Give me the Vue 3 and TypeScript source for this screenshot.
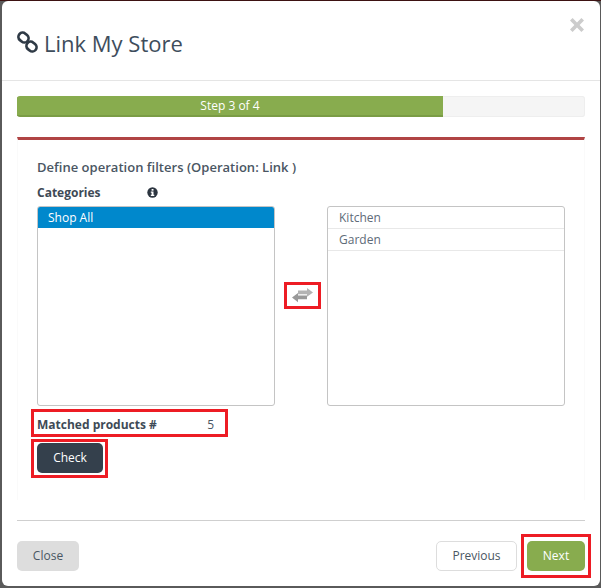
<script setup lang="ts">
const leftItems: string[] = ['Shop All']
const rightItems: string[] = ['Kitchen', 'Garden']
</script>

<template>
  <div class="page">
    <div class="modal">
      <header class="head">
        <h1 class="title">
          <svg class="link-icon" width="24" height="24" viewBox="0 0 24 24" fill="none" stroke="#2f3a46" stroke-width="2.7">
            <rect x="1.2" y="2.4" width="10.6" height="8.4" rx="4.2" transform="rotate(40 6.5 6.6)" />
            <rect x="9.2" y="11.4" width="10.6" height="8.4" rx="4.2" transform="rotate(40 14.5 15.6)" />
          </svg>
          <span>Link My Store</span>
        </h1>
        <svg class="close-x" width="14" height="14" viewBox="0 0 14 14">
          <path d="M2.6 0 7 4.4 11.4 0 14 2.6 9.6 7 14 11.4 11.4 14 7 9.6 2.6 14 0 11.4 4.4 7 0 2.6Z" fill="#cccccc" />
        </svg>
      </header>

      <main class="body">
        <div class="progress">
          <div class="bar">Step 3 of 4</div>
        </div>

        <section class="panel">
          <h2 class="define">Define operation filters (Operation: Link )</h2>
          <div class="cat-row">
            <span class="cat-label">Categories</span>
            <svg width="11" height="11" viewBox="0 0 11 11">
              <circle cx="5.5" cy="5.5" r="5.2" fill="#2c3540" />
              <rect x="4.6" y="2" width="1.9" height="1.7" fill="#fff" />
              <path d="M3.8 4.6h2.7v3.2h.8v1.1H3.8V7.8h.8V5.7h-.8Z" fill="#fff" />
            </svg>
          </div>

          <div class="lists">
            <ul class="list">
              <li v-for="item in leftItems" :key="item" class="item selected">{{ item }}</li>
            </ul>
            <div class="swap-col">
              <div class="mark swap">
                <svg width="23" height="16" viewBox="0 0 23 16">
                  <path d="M7 2.6h9V0l6 4.4-6 4.4V6.2H7Z" fill="#b3b3b3" />
                  <path d="M16 7.4H7V5L1 9.6l6 4.6v-3h9Z" fill="#999999" />
                </svg>
              </div>
            </div>
            <ul class="list">
              <li v-for="item in rightItems" :key="item" class="item plain">{{ item }}</li>
            </ul>
          </div>

          <div class="mark matched">
            <span class="matched-label">Matched products #</span>
            <span class="matched-val">5</span>
          </div>
          <div class="mark check-wrap">
            <button class="btn check" type="button">Check</button>
          </div>
        </section>

        <hr class="rule" />

        <footer class="foot">
          <button class="btn close" type="button">Close</button>
          <div class="foot-right">
            <button class="btn prev" type="button">Previous</button>
            <div class="mark next-wrap">
              <button class="btn next" type="button">Next</button>
            </div>
          </div>
        </footer>
      </main>
    </div>
  </div>
</template>

<style>
html, body { margin: 0; padding: 0; background: #555; }
</style>

<style scoped>
* { box-sizing: border-box; }
.page {
  width: 601px;
  height: 588px;
  padding: 1px 1px 2px 2px;
  background: linear-gradient(#3d1212 0 1px, #5a5a5a 1px);
  font-family: "Open Sans", "Liberation Sans", sans-serif;
  color: #34404c;
  overflow: hidden;
}
.modal {
  height: 585px;
  background: #fff;
  border-radius: 6px;
}
.head {
  height: 80px;
  border-bottom: 1px solid #e5e5e5;
  display: flex;
  align-items: flex-start;
  justify-content: space-between;
  padding: 17px 16px 0 15px;
}
.title {
  margin: 11px 0 0;
  display: flex;
  align-items: center;
  gap: 3px;
  font-size: 22px;
  font-weight: 400;
  line-height: 28px;
  color: #3e4d5c;
}
.link-icon { margin-top: -1px; }
.body { padding: 15px 15px 0 15px; }
.progress {
  height: 21px;
  background: #f5f5f5;
  border-radius: 3px;
  box-shadow: inset 0 0 0 1px #eeeeee;
  overflow: hidden;
}
.bar {
  width: 75%;
  height: 20px;
  background: #88ac4e;
  border-bottom: 1px solid #7a9c45;
  box-shadow: 0 1px 0 #7a9c45;
  color: #fff;
  font-size: 12px;
  line-height: 20px;
  text-align: center;
}
.panel {
  margin-top: 20px;
  height: 363px;
  border-top: 3px solid #b04444;
  border-left: 1px solid #fafafa;
  border-right: 1px solid #fafafa;
  padding: 18px 19px 0 19px;
}
.define {
  margin: 0;
  font-size: 13px;
  font-weight: 600;
  line-height: 18px;
  color: #4a5663;
  letter-spacing: 0.02px;
}
.cat-row {
  margin-top: 7px;
  height: 18px;
  display: flex;
  align-items: center;
}
.cat-label {
  width: 110px;
  font-size: 12px;
  font-weight: 700;
  color: #3e4a56;
}
.lists {
  margin-top: 5px;
  display: flex;
}
.list {
  width: 238px;
  height: 200px;
  margin: 0;
  padding: 0;
  list-style: none;
  border: 1px solid #c4c4c4;
  border-radius: 3px;
  overflow: hidden;
}
.item {
  height: 22px;
  padding-left: 10px;
  font-size: 12px;
  line-height: 21px;
  color: #5e6b78;
  border-bottom: 1px solid #e8e8e8;
}
.item.plain { padding-left: 11px; }
.item.selected {
  height: 21px;
  background: #0088cc;
  color: #fff;
  border-bottom: 0;
}
.swap-col {
  width: 52px;
  padding: 76px 0 0 9px;
}
.mark { border: 3px solid #ed1c24; }
.swap {
  width: 37px;
  height: 27px;
  display: flex;
  align-items: center;
  justify-content: center;
}
.matched {
  width: 197px;
  height: 28px;
  margin: 3px 0 0 -6px;
  padding: 2px 11px 0 3px;
  display: flex;
  justify-content: space-between;
  align-items: center;
}
.matched-label {
  font-size: 12px;
  font-weight: 700;
  color: #3e4a56;
}
.matched-val {
  font-size: 12px;
  color: #4a5663;
}
.check-wrap {
  width: 77px;
  height: 39px;
  margin: 2px 0 0 -6px;
  padding: 1px 0 0 3px;
}
.btn {
  height: 30px;
  border: 0;
  border-radius: 5px;
  font-family: inherit;
  font-size: 12px;
  padding: 0 0 2px;
}
.check {
  width: 66px;
  background: #34404c;
  color: #fff;
}
.rule {
  margin: 20px 0 0;
  border: 0;
  border-top: 1px solid #cfcfcf;
}
.foot {
  margin-top: 20px;
  display: flex;
  justify-content: space-between;
  align-items: flex-start;
}
.close {
  width: 62px;
  background: #dddddd;
  color: #4a5663;
}
.foot-right {
  display: flex;
  align-items: flex-start;
}
.prev {
  width: 81px;
  background: #fff;
  border: 1px solid #dddddd;
  color: #4a5663;
}
.next-wrap {
  width: 70px;
  height: 44px;
  margin: -7px -6px 0 4px;
  padding: 4px 0 0 3px;
}
.next {
  width: 58px;
  background: #88ac4e;
  color: #fff;
}
</style>
